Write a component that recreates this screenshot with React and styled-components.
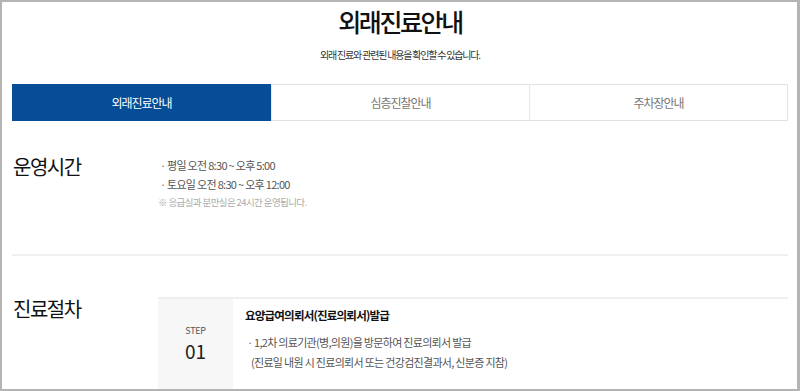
import React from 'react';
import styled, { createGlobalStyle } from 'styled-components';

const GlobalStyle = createGlobalStyle`
  html, body {
    margin: 0;
    padding: 0;
    background: #fff;
  }
  body {
    font-family: "Noto Sans CJK KR", "Noto Sans", sans-serif;
    color: #222;
  }
  * {
    box-sizing: border-box;
  }
`;

const tabs = ['외래진료안내', '심층진찰안내', '주차장안내'];

const hours = ['평일 오전 8:30 ~ 오후 5:00', '토요일 오전 8:30 ~ 오후 12:00'];

const App = () => {
  return (
    <Frame>
      <GlobalStyle />
      <Inner>
        <Header>
          <Title>외래진료안내</Title>
          <Lead>외래 진료와 관련된 내용을 확인할 수 있습니다.</Lead>
        </Header>

        <Tabs>
          {tabs.map((t, i) => (
            <Tab key={t} active={i === 0}>
              {t}
            </Tab>
          ))}
        </Tabs>

        <Section>
          <SectionTitle>운영시간</SectionTitle>
          <SectionBody>
            <List>
              {hours.map(h => (
                <Item key={h}>{h}</Item>
              ))}
            </List>
            <Note>※ 응급실과 분만실은 24시간 운영됩니다.</Note>
          </SectionBody>
        </Section>

        <Divider />

        <Section second>
          <SectionTitle>진료절차</SectionTitle>
          <StepCard>
            <StepNo>
              <StepLabel>STEP</StepLabel>
              <StepNum>01</StepNum>
            </StepNo>
            <StepBody>
              <StepHead>요양급여의뢰서(진료의뢰서)발급</StepHead>
              <List>
                <Item>1,2차 의료기관(병,의원)을 방문하여 진료의뢰서 발급</Item>
              </List>
              <Sub>(진료일 내원 시 진료의뢰서 또는 건강검진결과서, 신분증 지참)</Sub>
            </StepBody>
          </StepCard>
        </Section>
      </Inner>
    </Frame>
  );
};

const Frame = styled.div`
  width: 800px;
  height: 391px;
  border: 2px solid #b4b4b4;
  border-right-width: 3px;
  overflow: hidden;
  background: #fff;
`;

const Inner = styled.div`
  padding: 0 9px 0 10px;
`;

const Header = styled.header`
  text-align: center;
  padding-top: 5px;
`;

const Title = styled.h1`
  margin: 0;
  font-size: 25px;
  line-height: 28px;
  font-weight: 500;
  letter-spacing: -2.4px;
  color: #111;
`;

const Lead = styled.p`
  margin: 13px 0 0;
  font-size: 10px;
  line-height: 14px;
  letter-spacing: -1.2px;
  color: #333;
`;

const Tabs = styled.ul`
  display: grid;
  grid-template-columns: repeat(3, 1fr);
  margin: 22px 0 0;
  padding: 0;
  list-style: none;
  border: 1px solid #e2e2e2;
  height: 37px;
`;

const Tab = styled.li`
  display: flex;
  align-items: center;
  justify-content: center;
  font-size: 12px;
  letter-spacing: -1px;
  color: ${p => (p.active ? '#fff' : '#777')};
  background: ${p => (p.active ? '#064c96' : '#fff')};
  margin: ${p => (p.active ? '-1px 0 -1px -1px' : '0')};
  & + & {
    border-left: 1px solid #e8e8e8;
  }
`;

const Section = styled.section`
  display: flex;
  align-items: flex-start;
  padding-top: ${p => (p.second ? '40px' : '33px')};
  padding-bottom: ${p => (p.second ? '0' : '44px')};
`;

const SectionTitle = styled.h2`
  flex: 0 0 146px;
  margin: 0;
  padding-left: 1px;
  font-size: 20px;
  line-height: 26px;
  font-weight: 400;
  letter-spacing: -1.5px;
  color: #111;
`;

const SectionBody = styled.div`
  padding-top: 2px;
`;

const List = styled.ul`
  margin: 0;
  padding: 0;
  list-style: none;
`;

const Item = styled.li`
  font-size: 11px;
  line-height: 19px;
  letter-spacing: -0.7px;
  color: #555;
  &::before {
    content: '·';
    display: inline-block;
    width: 7px;
    margin-left: 2px;
    color: #777;
  }
`;

const Note = styled.p`
  margin: 0;
  font-size: 9.5px;
  line-height: 16px;
  letter-spacing: -0.6px;
  color: #aaa;
`;

const Divider = styled.hr`
  margin: 0;
  border: 0;
  border-top: 2px solid #f0f0f0;
`;

const StepCard = styled.div`
  flex: 1;
  display: flex;
  min-height: 92px;
  border-top: 2px solid #efefef;
  margin-top: 1px;
`;

const StepNo = styled.div`
  flex: 0 0 75px;
  background: #f7f7f7;
  text-align: center;
  padding-top: 25px;
`;

const StepLabel = styled.div`
  font-size: 9px;
  line-height: 14px;
  color: #555;
  letter-spacing: -0.3px;
`;

const StepNum = styled.div`
  margin-top: 2px;
  font-size: 19px;
  line-height: 22px;
  color: #222;
`;

const StepBody = styled.div`
  padding: 8px 0 0 12px;
  ${List} {
    margin-top: 9px;
  }
  ${Item} {
    line-height: 20px;
  }
`;

const StepHead = styled.h3`
  margin: 0;
  font-size: 11.5px;
  line-height: 16px;
  font-weight: 700;
  letter-spacing: -0.8px;
  color: #111;
`;

const Sub = styled.p`
  margin: 0;
  padding-left: 6px;
  font-size: 11px;
  line-height: 20px;
  letter-spacing: -0.7px;
  color: #555;
`;

export default App;
